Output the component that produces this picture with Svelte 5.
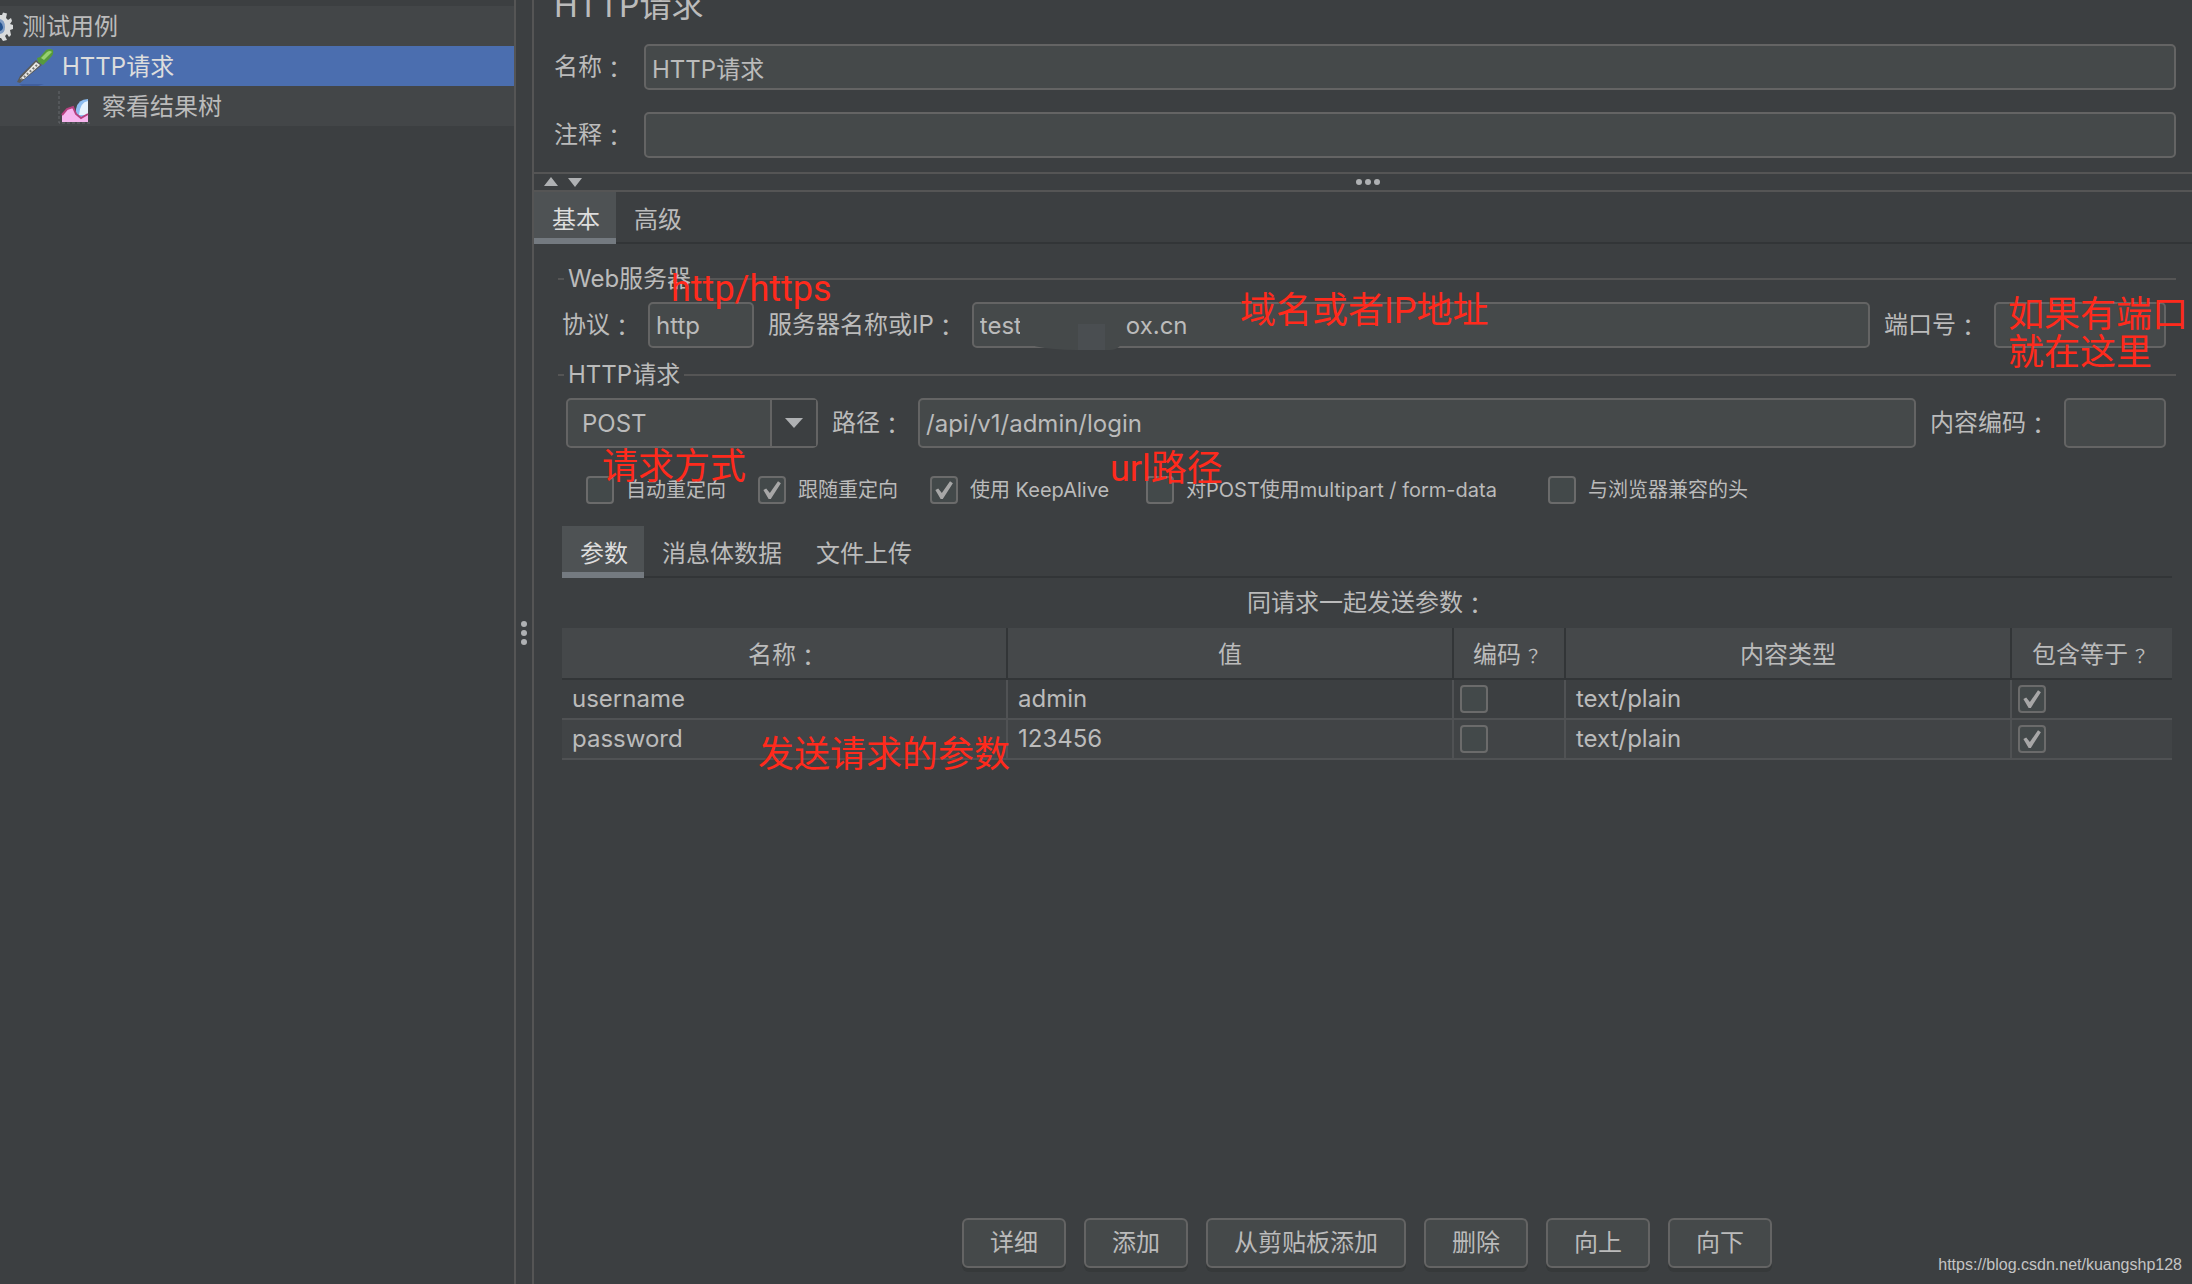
<script lang="ts">
  const columns = [
    { title: '名称', mark: '：', kind: 'wide' },
    { title: '值', mark: '', kind: 'wide' },
    { title: '编码', mark: '？', kind: 'encode' },
    { title: '内容类型', mark: '', kind: 'wide' },
    { title: '包含等于', mark: '？', kind: 'equals' },
  ];
  const rows = [
    { name: 'username', value: 'admin', encode: false, type: 'text/plain', equals: true },
    { name: 'password', value: '123456', encode: false, type: 'text/plain', equals: true },
  ];
  const options = [
    { label: '自动重定向', on: false },
    { label: '跟随重定向', on: true },
    { label: '使用 KeepAlive', on: true },
    { label: '对POST使用multipart / form-data', on: false },
    { label: '与浏览器兼容的头', on: false },
  ];
  const actions = ['详细', '添加', '从剪贴板添加', '删除', '向上', '向下'];
</script>

<div class="app">
  <aside class="tree">
    <div class="node root">
      <svg class="gear" width="14" height="30" viewBox="0 0 14 30" aria-hidden="true">
        <path d="M0 3 L2 3 L3 0.500 L7 1.500 L6 6 L8 8 L11 6 L12 9 L10 12 L13 13 L13 17 L10 18 L11 23 L9 25 L7 22 L5 24 L7 28 L3 29 L1 26 L0 26 Z" fill="#d9dbdc" />
        <path d="M0 7 Q5 8 5 15 Q5 21 0 22 Z" fill="#7f9cc4" />
        <path d="M0 10 Q3 12 3 15 Q3 18 0 19 Z" fill="#24528f" />
      </svg>
      <span>测试用例</span>
    </div>
    <div class="node request selected">
      <svg width="40" height="38" viewBox="0 0 40 38" aria-hidden="true">
        <path d="M3 36 H28 L22 38 H6 Z" fill="#405f9e" />
        <path d="M1 34 L4 28 L20 12 L26 17 L10 30 L4 35 Z" fill="#5b5b58" />
        <path d="M4 31 L20 14 L24 17 L8 31 Z" fill="#e9e9e6" />
        <path d="M5 32 L21 17" stroke="#777773" stroke-width="2" stroke-dasharray="2 2" />
        <path d="M21 10 L24 9 L30 2 Q34 0 37 2 Q38 6 35 9 L30 14 L27 17 L22 14 Z" fill="#569a3c" />
        <path d="M25 10 L31 4 Q34 2 36 4 L28 12 Z" fill="#96d070" />
      </svg>
      <span>HTTP请求</span>
    </div>
    <div class="node result">
      <svg width="34" height="36" viewBox="0 0 34 36" aria-hidden="true">
        <path d="M1 2 V34 H32" fill="none" stroke="#66696c" stroke-width="1" stroke-dasharray="3 2" />
        <path d="M18 32 V20 Q20 10 30 10 V32 Z" fill="#8dbdf0" />
        <path d="M21 26 Q22 13 30 12 V26 Z" fill="#e6f3fd" />
        <path d="M4 33 V26 L9 20 L15 18 L18 25 L23 29 L30 25 V33 Z" fill="#f7b5ee" />
        <path d="M4 26 L9 20 L15 18 L18 25 L23 29 L30 25" fill="none" stroke="#b5407f" stroke-width="2" />
      </svg>
      <span>察看结果树</span>
    </div>
  </aside>

  <div class="splitter"><i></i><i></i><i></i></div>

  <main class="panel">
    <h1>HTTP请求</h1>
    <div class="head">
      <label for="name">名称<span class="mark">：</span></label>
      <input id="name" class="field" type="text" value="HTTP请求" />
    </div>
    <div class="head">
      <label for="note">注释<span class="mark">：</span></label>
      <input id="note" class="field" type="text" />
    </div>

    <div class="collapse">
      <svg width="40" height="10" viewBox="0 0 40 10" aria-hidden="true">
        <path d="M0 9 L7 0 L14 9 Z M24 1 H38 L31 10 Z" fill="#afb1b3" />
      </svg>
      <div class="grip"><i></i><i></i><i></i></div>
    </div>

    <nav class="tabs">
      <button class="tab active">基本</button>
      <button class="tab">高级</button>
    </nav>

    <section class="body">
      <h2>Web服务器</h2>
      <div class="line">
        <label for="protocol">协议<span class="mark">：</span></label>
        <input id="protocol" class="field short" type="text" value="http" />
        <label for="server">服务器名称或IP<span class="mark">：</span></label>
        <div class="server">
          <input id="server" class="field" type="text" value="test" />
          <span class="smudge"></span>
          <span class="tail">ox.cn</span>
        </div>
        <label for="port">端口号<span class="mark">：</span></label>
        <input id="port" class="field port" type="text" />
      </div>

      <h2>HTTP请求</h2>
      <div class="line tall">
        <div class="combo">
          <select aria-label="请求方式"><option>POST</option></select>
          <span class="arrow"><svg width="18" height="10" viewBox="0 0 18 10" aria-hidden="true"><path d="M0 0 H18 L9 10 Z" fill="#afb1b3" /></svg></span>
        </div>
        <label for="path">路径<span class="mark">：</span></label>
        <input id="path" class="field" type="text" value="/api/v1/admin/login" />
        <label for="charset">内容编码<span class="mark">：</span></label>
        <input id="charset" class="field charset" type="text" />
      </div>

      <div class="options">
        {#each options as option}
          <label class="option"><input type="checkbox" checked={option.on} />{option.label}</label>
        {/each}
      </div>

      <div class="params">
        <nav class="tabs">
          <button class="tab active">参数</button>
          <button class="tab">消息体数据</button>
          <button class="tab">文件上传</button>
        </nav>
        <table>
          <caption>同请求一起发送参数<span class="mark">：</span></caption>
          <thead>
            <tr>
              {#each columns as column}
                <th class={column.kind}>{column.title}{#if column.mark}<span class={column.mark === '？' ? 'query' : 'mark'}>{column.mark}</span>{/if}</th>
              {/each}
            </tr>
          </thead>
          <tbody>
            {#each rows as row}
              <tr>
                <td>{row.name}</td>
                <td>{row.value}</td>
                <td class="tick"><input type="checkbox" aria-label="编码" checked={row.encode} /></td>
                <td>{row.type}</td>
                <td class="tick"><input type="checkbox" aria-label="包含等于" checked={row.equals} /></td>
              </tr>
            {/each}
          </tbody>
        </table>
      </div>
    </section>

    <div class="actions">
      {#each actions as action}
        <button>{action}</button>
      {/each}
    </div>
  </main>

  <span class="note protocol-note">http/https</span>
  <span class="note server-note">域名或者IP地址</span>
  <span class="note port-note">如果有端口<br />就在这里</span>
  <span class="note method-note">请求方式</span>
  <span class="note path-note">url路径</span>
  <span class="note params-note">发送请求的参数</span>
  <span class="watermark">https://blog.csdn.net/kuangshp128</span>
</div>

<style>
  :global(body) { background: #3c3f41; }
  .app {
    position: relative;
    display: flex;
    min-height: 100vh;
    overflow: hidden;
    background: #3c3f41;
    color: #bbbbbb;
    font: 24px/32px Inter, "Noto Sans CJK SC", sans-serif;
  }
  .app * { box-sizing: border-box; }
  input, select, button { font: inherit; color: inherit; margin: 0; }
  i { display: block; width: 6px; height: 6px; border-radius: 50%; background: #afb1b3; }
  .mark { font-family: "Noto Sans CJK TC", sans-serif; line-height: 1; vertical-align: -3px; }
  .query { margin: 0 3px; font-family: "Noto Sans CJK TC", sans-serif; font-size: 18px; line-height: 1; }

  .tree { width: 514px; flex: none; padding-top: 6px; }
  .node { display: flex; align-items: center; height: 40px; padding-top: 2px; background: #434648; }
  .root { gap: 8px; }
  .request { gap: 6px; padding-left: 16px; }
  .result { gap: 10px; padding-left: 58px; }
  .selected { background: #4b6eaf; color: #dddddd; }

  .splitter {
    display: flex;
    flex: none;
    flex-direction: column;
    justify-content: center;
    align-items: center;
    gap: 3px;
    width: 20px;
    padding-bottom: 18px;
    border: solid #555555;
    border-width: 0 2px;
  }

  .panel { flex: 1; min-width: 0; display: flex; flex-direction: column; }
  h1 { margin: -16px 0 16px; padding-left: 20px; font-size: 32px; line-height: 44px; font-weight: 400; }
  .head { display: flex; align-items: center; gap: 18px; padding: 0 16px 0 20px; margin-bottom: 22px; }
  .head + .collapse { margin-top: -8px; }
  label { flex: none; white-space: nowrap; }
  .field {
    flex: 1;
    min-width: 0;
    width: 100%;
    height: 46px;
    padding: 0 6px;
    border: 2px solid #646464;
    border-radius: 5px;
    background: #45494a;
    outline: none;
  }

  .collapse {
    display: grid;
    grid-template-columns: 40px 1fr 40px;
    align-items: center;
    height: 20px;
    padding: 0 0 0 10px;
    border: solid #555555;
    border-width: 2px 0;
  }
  .grip { display: flex; gap: 3px; justify-content: center; }

  .tabs { display: flex; box-shadow: inset 0 -2px #323537; }
  .tab { height: 52px; padding: 3px 16px 0 18px; border: 0; background: none; }
  .active { background: #4e5254; color: #dddddd; box-shadow: inset 0 -6px #747a80; }

  .body { padding: 18px 16px 0 24px; }
  h2 { display: flex; align-items: center; gap: 4px; margin: 0; font-size: 24px; line-height: 34px; font-weight: 400; }
  h2::before, h2::after { content: ""; height: 2px; background: #555555; }
  h2::before { width: 6px; }
  h2::after { flex: 1; }
  .line { display: flex; align-items: center; gap: 14px; padding: 6px 10px 10px 4px; }
  .line .short { flex: none; width: 106px; }
  .line .port { flex: none; width: 172px; }
  .line .charset { flex: none; width: 102px; }
  .tall { padding: 6px 10px 0 8px; }
  .tall .field { height: 50px; }
  .server { position: relative; flex: 1; display: flex; }
  .smudge {
    position: absolute;
    left: 48px;
    top: 8px;
    width: 104px;
    height: 40px;
    border-radius: 0 0 14px 56px / 0 0 14px 12px;
    background: linear-gradient(#4a4e51, #4a4e51) 58px 14px / 27px 26px no-repeat, #45494a;
  }
  .tail { position: absolute; left: 154px; top: 8px; }

  .combo { position: relative; flex: none; width: 252px; height: 50px; }
  select {
    appearance: none;
    width: 100%;
    height: 50px;
    padding: 2px 14px 0;
    border: 2px solid #646464;
    border-radius: 5px;
    background: #45494a;
    outline: none;
  }
  .arrow {
    position: absolute;
    inset: 2px 2px 2px auto;
    display: flex;
    align-items: center;
    justify-content: center;
    width: 46px;
    border-left: 2px solid #646464;
    background: #3c3f41;
    pointer-events: none;
  }

  input[type="checkbox"] {
    appearance: none;
    flex: none;
    display: block;
    width: 28px;
    height: 28px;
    border: 2px solid #6b6b6b;
    border-radius: 4px;
    background: #43494a;
  }
  input[type="checkbox"]:checked::before {
    content: "";
    display: block;
    width: 24px;
    height: 24px;
    background: #a7a7a7;
    clip-path: polygon(14% 50%, 26% 44%, 41% 63%, 75% 14%, 87% 22%, 45% 87%, 36% 87%);
  }
  .options {
    display: grid;
    grid-template-columns: 172px 172px 216px 402px auto;
    padding: 27px 0 21px 28px;
    font-size: 20px;
    line-height: 30px;
  }
  .option { display: flex; align-items: center; gap: 12px; }

  .params { padding: 0 4px; }
  table { width: 100%; table-layout: fixed; border-collapse: separate; border-spacing: 0; }
  caption { height: 50px; line-height: 50px; }
  th { height: 52px; padding: 4px 0 0; background: #45484a; border: solid #323537; border-width: 0 2px 2px 0; font-weight: 400; }
  td { height: 40px; padding: 0 8px 0 10px; border: solid #505254; border-width: 0 2px 2px 0; }
  th:last-child, td:last-child { border-right: 0; }
  tr:nth-child(even) td { background: #414446; }
  .encode { width: 112px; }
  .equals { width: 160px; }
  .tick { padding: 0 6px; }

  .actions { display: flex; justify-content: center; gap: 18px; margin-top: auto; padding: 16px 10px 16px 18px; }
  .actions button {
    height: 50px;
    padding: 0 26px;
    border: 2px solid #646464;
    border-radius: 6px;
    background: #45494a;
    box-shadow: 0 4px #36393a;
  }

  .note { position: absolute; color: #ff2a1c; font: 36px/38px Roboto, "Noto Sans CJK SC", sans-serif; white-space: nowrap; }
  .protocol-note { left: 671px; top: 270px; }
  .server-note { left: 1240px; top: 292px; }
  .port-note { left: 2008px; top: 296px; }
  .method-note { left: 602px; top: 448px; }
  .path-note { left: 1110px; top: 450px; }
  .params-note { left: 758px; top: 736px; }
  .watermark { position: absolute; right: 10px; bottom: 7px; font: 16px/24px "Liberation Sans", sans-serif; color: #c4c4c4; }
</style>
